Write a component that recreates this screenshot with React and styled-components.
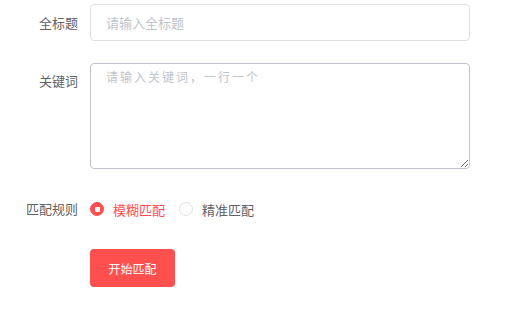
import React, { useState } from 'react';
import styled, { createGlobalStyle } from 'styled-components';

const GlobalStyle = createGlobalStyle`
  body {
    margin: 0;
    background: #fff;
    font-family: "Noto Sans CJK SC", "Noto Sans", sans-serif;
  }
`;

const Form = styled.form`
  padding-top: 4px;
  display: flex;
  flex-direction: column;
  gap: 22px;
`;

const Item = styled.div`
  display: flex;
  align-items: ${(p) => (p.top ? 'flex-start' : 'center')};
`;

const Label = styled.label`
  width: 78px;
  padding-right: 12px;
  text-align: right;
  font-size: 13px;
  line-height: 36px;
  color: #606266;
  flex-shrink: 0;
`;

const Input = styled.input`
  box-sizing: border-box;
  width: 380px;
  height: 37px;
  padding: 0 15px;
  border: 1px solid #dcdfe6;
  border-radius: 4px;
  font-family: inherit;
  font-size: 13px;
  color: #606266;
  outline: none;

  &::placeholder {
    color: #c0c4cc;
  }
`;

const TextArea = styled.textarea`
  box-sizing: border-box;
  width: 380px;
  height: 106px;
  padding: 4px 15px;
  border: 1px solid #c0c4cc;
  border-radius: 4px;
  font-family: inherit;
  font-size: 12px;
  letter-spacing: 2px;
  line-height: 1.5;
  color: #606266;
  outline: none;
  resize: vertical;

  &::placeholder {
    color: #c0c4cc;
  }
`;

const RadioGroup = styled.div`
  display: flex;
  align-items: center;
  gap: 14px;
  height: 36px;
`;

const Radio = styled.span`
  display: flex;
  align-items: center;
  gap: 9px;
  cursor: pointer;
  font-size: 13px;
  color: ${(p) => (p.checked ? '#ff4f4f' : '#606266')};
`;

const Dot = styled.span`
  box-sizing: border-box;
  width: 14px;
  height: 14px;
  border-radius: 50%;
  border: 1px solid ${(p) => (p.checked ? '#ff4f4f' : '#dcdfe6')};
  background: ${(p) => (p.checked ? '#ff4f4f' : '#fff')};
  display: flex;
  align-items: center;
  justify-content: center;

  &::after {
    content: '';
    width: 5px;
    height: 5px;
    border-radius: 1px;
    background: #fff;
    display: ${(p) => (p.checked ? 'block' : 'none')};
  }
`;

const Button = styled.button`
  margin-left: 90px;
  width: 85px;
  height: 38px;
  border: none;
  border-radius: 4px;
  background: #ff4f4f;
  color: #fff;
  font-family: inherit;
  font-size: 12px;
  cursor: pointer;
`;

const rules = ['模糊匹配', '精准匹配'];

export default function App() {
  const [rule, setRule] = useState(0);

  return (
    <>
      <GlobalStyle />
      <Form onSubmit={(e) => e.preventDefault()}>
        <Item>
          <Label>全标题</Label>
          <Input placeholder="请输入全标题" />
        </Item>
        <Item top>
          <Label>关键词</Label>
          <TextArea placeholder="请输入关键词，一行一个" />
        </Item>
        <Item>
          <Label>匹配规则</Label>
          <RadioGroup>
            {rules.map((r, i) => (
              <Radio key={r} checked={rule === i} onClick={() => setRule(i)}>
                <Dot checked={rule === i} />
                {r}
              </Radio>
            ))}
          </RadioGroup>
        </Item>
        <Button type="submit">开始匹配</Button>
      </Form>
    </>
  );
}
